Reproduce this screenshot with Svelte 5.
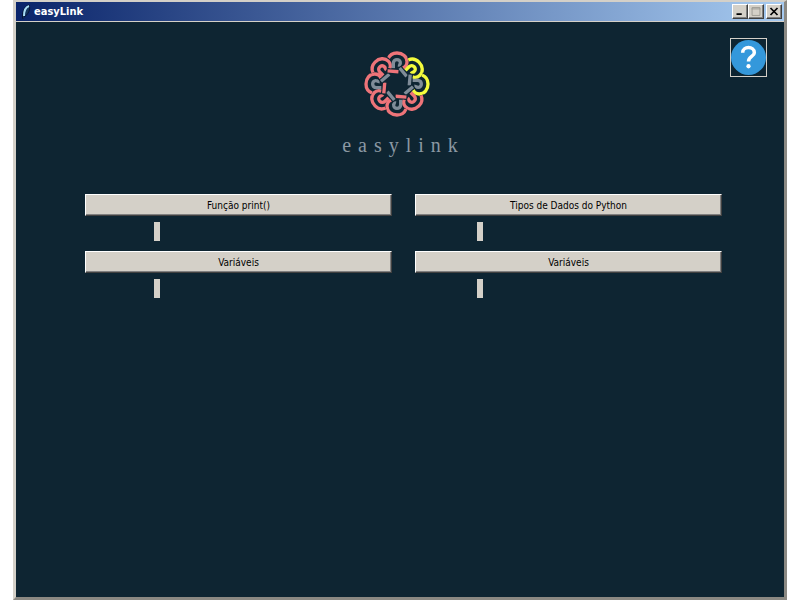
<script>
  const lessons = ['Função print()', 'Tipos de Dados do Python', 'Variáveis', 'Variáveis'];
  const salmon = '#ee7479';
  const gray = '#7f8c98';
  const yellow = '#f4fb3c';
  const loops = [
    { outer: salmon, inner: gray },
    { outer: yellow, inner: yellow },
    { outer: yellow, inner: gray },
    { outer: salmon, inner: salmon },
    { outer: salmon, inner: gray },
    { outer: salmon, inner: salmon },
    { outer: salmon, inner: gray },
    { outer: salmon, inner: salmon }
  ];
  const arc = 'M-27-75C-22-88-11-93 0-93C17-93 30-82 30-67C30-58 25-51 17-48';
  const hook = 'M-11-47V-62C-11-77 11-76 10-63C10-59 7-56 3-57';
  const tail = 'M8-48L29-23';
</script>

<div class="window">
  <header>
    <svg class="feather" viewBox="0 0 14 16" aria-hidden="true">
      <path d="M4 15C2 10 5 2 10 1C12 5 9 11 5 13" fill="#15365d" stroke="#061434" />
      <path d="M5 12C5 7 7 3 10 2" fill="none" stroke="#a9dcf4" stroke-width="2" />
    </svg>
    <h1>easyLink</h1>
    <div class="controls">
      <button aria-label="Minimizar"><svg viewBox="0 0 16 14"><path d="M4 10H10" stroke="#000" stroke-width="2" /></svg></button>
      <button aria-label="Maximizar"><svg viewBox="0 0 16 14"><path d="M3.500 2.500H12.500V11.500H3.500ZM3 4H13" fill="none" stroke="#999790" /></svg></button>
      <button class="close" aria-label="Fechar"><svg viewBox="0 0 16 14"><path d="M4 3L12 11M12 3L4 11" stroke="#000" stroke-width="2" /></svg></button>
    </div>
  </header>
  <main>
    <button class="help" aria-label="Ajuda">
      <svg viewBox="0 0 36 36">
        <circle cx="18" cy="18" r="18" fill="#3498db" />
        <path d="M12 13C12 6 24 6 24 13C24 17 18 17 18 22" fill="none" stroke="#fff" stroke-width="3.600" />
        <circle cx="18" cy="27" r="2.200" fill="#fff" />
      </svg>
    </button>
    <div class="brand">
      <svg class="logo" viewBox="-99 -99 198 198" aria-hidden="true">
        {#each loops as loop, i}
          <g transform="rotate({i * 45})">
            <path d={arc} class="edge" />
            <path d={arc} class="strand" stroke={loop.outer} />
          </g>
        {/each}
        {#each loops as loop, i}
          <g transform="rotate({i * 45})">
            <path d={tail} class="edge" />
            <path d={tail} class="strand" stroke={loop.inner === yellow ? gray : loop.inner} />
            <path d={hook} class="strand" stroke={loop.inner} />
          </g>
        {/each}
      </svg>
      <p>easylink</p>
    </div>
    <div class="lessons">
      {#each lessons as lesson}
        <div class="lesson">
          <button>{lesson}</button>
          <span class="status"></span>
        </div>
      {/each}
    </div>
  </main>
</div>

<style>
  :global(body) { background: #fff; }
  .window {
    box-sizing: border-box;
    min-height: 100vh;
    margin: 0 13px;
    display: flex;
    flex-direction: column;
    background: #0e2532;
    border: solid #d4d0c8;
    border-width: 2px 3px 3px;
    border-right-color: #8b8983;
    border-bottom-color: #8b8983;
    font-family: "DejaVu Sans Condensed", "DejaVu Sans", sans-serif;
    font-size: 10px;
  }
  header {
    height: 19px;
    display: flex;
    align-items: center;
    padding: 0 2px 0 3px;
    background: linear-gradient(90deg, #0a246a, #a6caf0);
    border-bottom: 1px solid #d4d0c8;
  }
  .feather { width: 14px; height: 16px; }
  h1 {
    flex: 1;
    margin: 0 0 0 1px;
    color: #fff;
    font-size: 11px;
    line-height: 19px;
  }
  .controls { display: flex; }
  button {
    padding: 0;
    color: #000;
    font: inherit;
    background: #d4d0c8;
    border: 1px solid;
    border-color: #fff #404040 #404040 #fff;
    box-shadow: inset -1px -1px #808080;
  }
  .controls button { width: 16px; height: 15px; }
  .controls .close { margin-left: 2px; }
  .controls svg { display: block; width: 100%; height: 100%; }
  main { flex: 1; position: relative; padding: 29px 62px 24px 69px; }
  .help {
    position: absolute;
    top: 16px;
    right: 17px;
    width: 37px;
    height: 39px;
    background: transparent;
    border: 1px solid #d4d0c8;
    box-shadow: none;
  }
  .help svg { display: block; width: 100%; height: 100%; }
  .brand { display: flex; flex-direction: column; align-items: center; }
  .logo { width: 66px; height: 66px; margin-right: 13px; }
  .edge, .strand { fill: none; }
  .edge { stroke: #0e2532; stroke-width: 16px; }
  .strand { stroke-width: 10px; }
  .brand p {
    margin: 16px 0 37px;
    color: #8b98a3;
    font-family: "Liberation Serif", serif;
    font-size: 20px;
    line-height: 24px;
    letter-spacing: 7px;
  }
  .lessons { display: grid; grid-template-columns: 1fr 1fr; gap: 10px 23px; }
  .lesson { display: flex; flex-direction: column; }
  .lesson button { height: 22px; }
  .status { width: 6px; height: 19px; margin: 6px 0 0 69px; background: #d4d0c8; }
  .lesson:nth-child(even) .status { margin-left: 62px; }
</style>
